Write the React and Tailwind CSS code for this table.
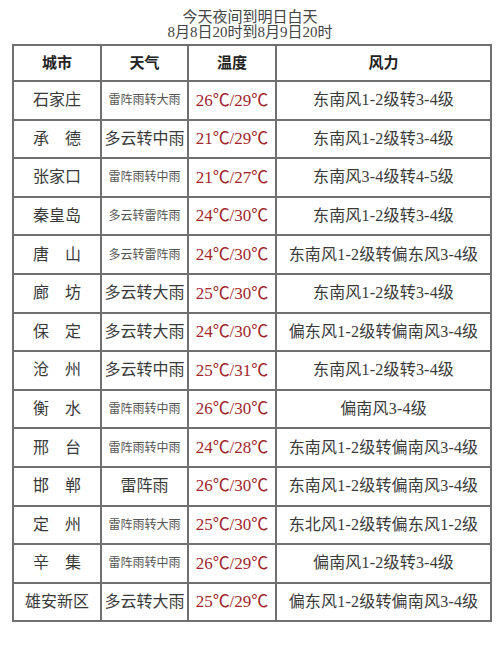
import React from "react";

const rows = [
  ["石家庄", "雷阵雨转大雨", "26℃/29℃", "东南风1-2级转3-4级", true],
  ["承　德", "多云转中雨", "21℃/29℃", "东南风1-2级转3-4级", false],
  ["张家口", "雷阵雨转中雨", "21℃/27℃", "东南风3-4级转4-5级", true],
  ["秦皇岛", "多云转雷阵雨", "24℃/30℃", "东南风1-2级转3-4级", true],
  ["唐　山", "多云转雷阵雨", "24℃/30℃", "东南风1-2级转偏东风3-4级", true],
  ["廊　坊", "多云转大雨", "25℃/30℃", "东南风1-2级转3-4级", false],
  ["保　定", "多云转大雨", "24℃/30℃", "偏东风1-2级转偏南风3-4级", false],
  ["沧　州", "多云转中雨", "25℃/31℃", "东南风1-2级转3-4级", false],
  ["衡　水", "雷阵雨转中雨", "26℃/30℃", "偏南风3-4级", true],
  ["邢　台", "雷阵雨转中雨", "24℃/28℃", "东南风1-2级转偏南风3-4级", true],
  ["邯　郸", "雷阵雨", "26℃/30℃", "东南风1-2级转偏南风3-4级", false],
  ["定　州", "雷阵雨转大雨", "25℃/30℃", "东北风1-2级转偏东风1-2级", true],
  ["辛　集", "雷阵雨转中雨", "26℃/29℃", "偏南风1-2级转3-4级", true],
  ["雄安新区", "多云转大雨", "25℃/29℃", "偏东风1-2级转偏南风3-4级", false],
];

const font = { fontFamily: '"Liberation Serif", "Noto Sans CJK SC", serif' };

export default function App() {
  return (
    <div className="w-[500px] h-[646px] bg-white text-[#3a3a3a]" style={font}>
      <div className="pt-[10px] text-center text-[15px] leading-[15px] text-[#444]">
        <div>今天夜间到明日白天</div>
        <div>8月8日20时到8月9日20时</div>
      </div>
      <table className="mt-[4px] ml-[12px] w-[478px] border-collapse table-fixed border-2 border-[#707070]">
        <colgroup>
          <col className="w-[88px]" />
          <col className="w-[87px]" />
          <col className="w-[88px]" />
          <col className="w-[215px]" />
        </colgroup>
        <thead>
          <tr className="h-[36px]">
            {["城市", "天气", "温度", "风力"].map((h) => (
              <th key={h} className="border-2 border-[#707070] text-[15px] font-bold text-[#222] text-center p-0">
                {h}
              </th>
            ))}
          </tr>
        </thead>
        <tbody>
          {rows.map(([city, weather, temp, wind, small]) => (
            <tr key={city} className="h-[38.6px]">
              <td className="border-2 border-[#707070] text-center text-[16px] p-0 whitespace-nowrap">{city}</td>
              <td className={`border-2 border-[#707070] text-center p-0 whitespace-nowrap ${small ? "text-[12px] text-[#555]" : "text-[16px]"}`}>
                {weather}
              </td>
              <td className="border-2 border-[#707070] text-center text-[17px] text-[#a1262c] p-0 whitespace-nowrap">{temp}</td>
              <td className="border-2 border-[#707070] text-center text-[16px] p-0 whitespace-nowrap tracking-[0.2px]">{wind}</td>
            </tr>
          ))}
        </tbody>
      </table>
    </div>
  );
}
